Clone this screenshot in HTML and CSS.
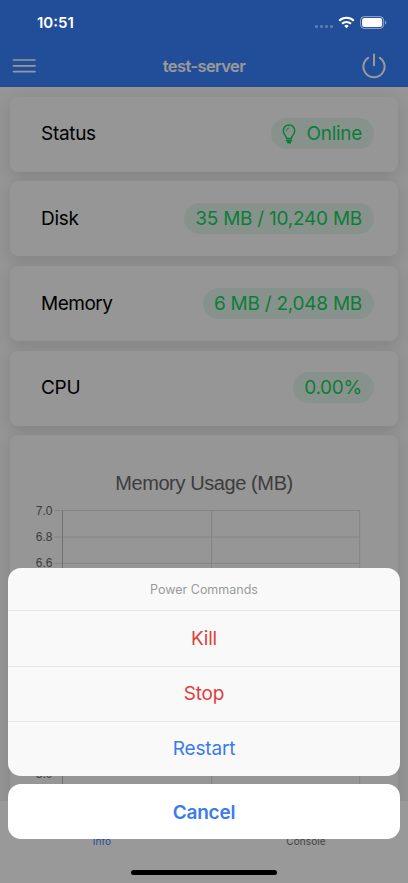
FILE: index.html
```html
<!DOCTYPE html>
<html lang="en">
<head>
  <meta charset="UTF-8" />
  <meta name="viewport" content="width=device-width, initial-scale=1.0"/>
  <title>test-server</title>
  <link rel="stylesheet" href="styles.css">
</head>
<body>
  <div class="app">
    <header class="header">
      <div class="status-space"></div>
      <div class="toolbar">
        <svg class="menu-icon" width="24" height="16" viewBox="0 0 24 16" fill="none" stroke="currentColor" stroke-width="1.7" stroke-linecap="round">
          <path d="M1.5 2h21.5M1.5 7.8h21.5M1.5 13.6h21.5"/>
        </svg>
        <h1>test-server</h1>
        <svg class="power-icon" width="26" height="26" viewBox="0 0 26 26" fill="none" stroke="currentColor" stroke-width="2" stroke-linecap="round">
          <path d="M18.8 4.8a10.6 10.6 0 1 1-11.6 0M13 1.6v10.6"/>
        </svg>
      </div>
    </header>

    <main class="content">
      <div class="card">
        <span class="label">Status</span>
        <span class="chip">
          <svg class="bulb" width="14" height="20" viewBox="0 0 15 20" preserveAspectRatio="none" fill="none" stroke="currentColor" stroke-width="1.5" stroke-linecap="round" stroke-linejoin="round">
            <path d="M5 14.6C4.9 11.7 1.3 10.4 1.3 6.7a6.2 5.8 0 0 1 12.4 0c0 3.7-3.6 5-3.7 7.9z"/>
            <path d="M4.5 6.8c.1-1.6 1.2-2.7 2.8-2.8" stroke-width="1"/>
            <path d="M5 16.5h5M6.2 18.5h2.6" stroke-width="2"/>
          </svg>
          <span class="value online">Online</span>
        </span>
      </div>
      <div class="card">
        <span class="label">Disk</span>
        <span class="chip"><span class="value">35 MB / 10,240 MB</span></span>
      </div>
      <div class="card">
        <span class="label memory">Memory</span>
        <span class="chip"><span class="value">6 MB / 2,048 MB</span></span>
      </div>
      <div class="card">
        <span class="label">CPU</span>
        <span class="chip"><span class="value">0.00%</span></span>
      </div>

      <div class="chart-card">
        <h2>Memory Usage (MB)</h2>
        <svg class="chart" width="388" height="290" viewBox="0 0 388 290">
          <g class="grid">
            <path d="M44 10.5H350M44 37H350M44 63.4H350M44 89.8H350M44 116.2H350M44 142.6H350M44 169H350M44 195.4H350M44 221.8H350M44 248.2H350M44 274.5H350"/>
            <path d="M201.5 10.5V290M349.7 10.5V290"/>
            <path class="axis" d="M52.5 10.5V290"/>
          </g>
          <g class="ticks">
            <text x="42.5" y="14.6">7.0</text>
            <text x="42.5" y="41">6.8</text>
            <text x="42.5" y="67.4">6.6</text>
            <text x="42.5" y="93.8">6.4</text>
            <text x="42.5" y="120.2">6.2</text>
            <text x="42.5" y="146.6">6.0</text>
            <text x="42.5" y="173">5.8</text>
            <text x="42.5" y="199.4">5.6</text>
            <text x="42.5" y="225.8">5.4</text>
            <text x="42.5" y="252.2">5.2</text>
            <text x="42.5" y="278">5.0</text>
          </g>
        </svg>
      </div>
    </main>

    <nav class="tabs">
      <a class="tab active">Info</a>
      <a class="tab">Console</a>
    </nav>
  </div>

  <div class="backdrop"></div>

  <div class="status-bar">
    <span class="time">10:51</span>
    <span class="signal"><i></i><i></i><i></i><i></i></span>
    <svg class="wifi" width="17" height="13" viewBox="0 0 17 13" fill="none" stroke="#fff" stroke-width="2.1">
      <path d="M1.2 4.8a10.4 10.4 0 0 1 14.6 0M4 7.8a6.4 6.4 0 0 1 9 0"/>
      <path d="M8.5 12.2 6.3 9.9a3.2 3.2 0 0 1 4.4 0z" fill="#fff" stroke="none"/>
    </svg>
    <svg class="battery" width="27" height="13" viewBox="0 0 27 13">
      <rect x=".6" y=".6" width="23" height="11.8" rx="3.5" fill="none" stroke="#fff" stroke-opacity=".5"/>
      <rect x="2.1" y="2.1" width="20" height="8.8" rx="2" fill="#fff"/>
      <path d="M25 4.4v4.2c1.8-.8 1.8-3.4 0-4.2z" fill="#fff" fill-opacity=".5"/>
    </svg>
  </div>

  <div class="action-sheet">
    <div class="sheet-group">
      <div class="sheet-title">Power Commands</div>
      <button class="sheet-button danger">Kill</button>
      <button class="sheet-button danger">Stop</button>
      <button class="sheet-button restart">Restart</button>
    </div>
    <div class="sheet-group cancel-group">
      <button class="sheet-button cancel">Cancel</button>
    </div>
  </div>
  <div class="home-bar"></div>
</body>
</html>
```

FILE: styles.css
```css
* {
  box-sizing: border-box;
}
html, body {
  margin: 0;
  padding: 0;
  height: 883px;
  overflow: hidden;
  font-family: Inter, "Liberation Sans", sans-serif;
  background: #fff;
}
body {
  position: relative;
}

.app {
  height: 883px;
  display: flex;
  flex-direction: column;
}
.header {
  height: 87px;
  flex-shrink: 0;
  background: #3880ff;
  color: #fff;
}
.status-space {
  height: 44px;
}
.toolbar {
  height: 43px;
  display: flex;
  align-items: center;
  justify-content: space-between;
  padding: 0 21px 0 12px;
}
.toolbar h1 {
  margin: 0 0 0 11px;
  font-size: 16.5px;
  font-weight: 600;
  letter-spacing: -0.6px;
}

.content {
  flex: 1;
  min-height: 0;
  overflow: hidden;
  padding: 9.7px 10px 0;
  display: flex;
  flex-direction: column;
  gap: 9.7px;
  background: #f8f8f8;
}
.card {
  height: 75px;
  flex-shrink: 0;
  display: flex;
  align-items: center;
  justify-content: space-between;
  padding: 0 24px 1px 31px;
  border-radius: 8px;
  background: #fafafa;
  box-shadow: 0 4px 16px rgba(0, 0, 0, 0.12);
}
.label {
  font-size: 19px;
  letter-spacing: -0.3px;
  color: #000;
}
.label.memory {
  letter-spacing: -0.5px;
}
.chip {
  height: 31px;
  display: flex;
  align-items: center;
  padding: 0 12px 0 11px;
  border-radius: 16px;
  background: rgba(16, 200, 96, 0.1);
  color: #15d060;
}
.bulb {
  margin-right: 11px;
}
.value {
  font-size: 19px;
  letter-spacing: -0.25px;
  white-space: nowrap;
}
.value.online {
  letter-spacing: -0.3px;
}

.chart-card {
  height: 400px;
  flex-shrink: 0;
  padding-top: 33.5px;
  border-radius: 8px;
  background: #fafafa;
  box-shadow: 0 4px 16px rgba(0, 0, 0, 0.12);
}
.chart-card h2 {
  margin: 0;
  height: 31px;
  line-height: 28px;
  text-align: center;
  font-family: "Liberation Sans", sans-serif;
  font-size: 20px;
  font-weight: normal;
  letter-spacing: -0.4px;
  color: #666;
}
.chart {
  display: block;
}
.grid path {
  fill: none;
  stroke: #dcdcdc;
  stroke-width: 1;
}
.grid .axis {
  stroke: #bbb;
}
.ticks text {
  font-family: "Liberation Sans", sans-serif;
  font-size: 12px;
  text-anchor: end;
  fill: #666;
}

.tabs {
  height: 83px;
  flex-shrink: 0;
  display: flex;
  border-top: 1px solid #eee;
  background: #fff;
}
.tab {
  flex: 1;
  padding-top: 34px;
  text-align: center;
  font-size: 10px;
  line-height: 12px;
  letter-spacing: 0.1px;
  color: #737373;
}
.tab.active {
  color: #3880ff;
}

.backdrop {
  position: absolute;
  inset: 0;
  background: rgba(0, 0, 0, 0.4);
}

/* system status bar stays above the backdrop */
.status-bar {
  position: absolute;
  top: 0;
  left: 0;
  width: 100%;
  height: 45px;
  display: flex;
  align-items: center;
  padding: 0 21px 0 37px;
  color: #fff;
}
.time {
  flex: 1;
  font-size: 15px;
  font-weight: 600;
}
.signal {
  display: flex;
  gap: 2px;
  padding-top: 8px;
  margin-right: 5px;
}
.signal i {
  width: 3px;
  height: 3px;
  border-radius: 1px;
  background: #fff;
  opacity: 0.25;
}
.wifi {
  margin-right: 5px;
}

.action-sheet {
  position: absolute;
  left: 8px;
  right: 8px;
  bottom: 44px;
  display: flex;
  flex-direction: column;
  gap: 8px;
}
.sheet-group {
  overflow: hidden;
  border-radius: 13px;
  background: #f9f9f9;
}
.cancel-group {
  background: #fff;
}
.sheet-title {
  height: 42.6px;
  line-height: 43px;
  text-align: center;
  font-size: 12.5px;
  color: #999;
}
.sheet-button {
  display: block;
  width: 100%;
  height: 55.2px;
  padding: 0;
  border: 0;
  border-top: 1px solid #e8e8e8;
  background: transparent;
  font-family: inherit;
  font-size: 19px;
  letter-spacing: -0.2px;
  color: #3b7cec;
}
.sheet-button.danger {
  color: #e03e40;
}
.sheet-button.cancel {
  height: 55px;
  padding-top: 1px;
  border-top: 0;
  font-weight: 600;
}

.home-bar {
  position: absolute;
  left: 131px;
  bottom: 8px;
  width: 146px;
  height: 5px;
  border-radius: 3px;
  background: #000;
}
```
